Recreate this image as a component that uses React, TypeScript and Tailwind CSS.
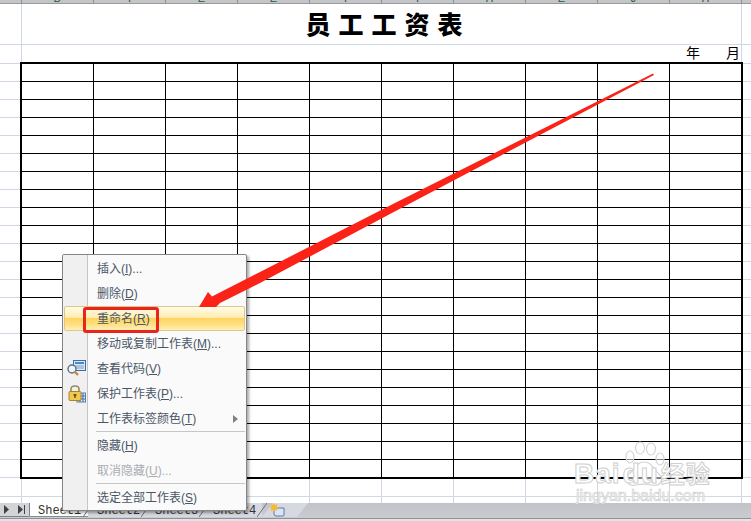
import React from "react";

const COLS = ["D", "I", "E", "E", "I", "I", "H", "E", "J", "H"];

function Gutter({ className }: { className: string }) {
  return (
    <div className={className}>
      <div className="h-[2px] border-b border-[#d0d7e5]" />
      {Array.from({ length: 23 }).map((_, i) => (
        <div key={i} className="h-[18px] border-b border-[#d0d7e5]" />
      ))}
    </div>
  );
}

function Item({ label, key2, tail, disabled, active, arrow }: { label: string; key2: string; tail?: string; disabled?: boolean; active?: boolean; arrow?: boolean }) {
  return (
    <div
      className={
        "relative mx-px flex h-[25px] items-center rounded-[2px] pl-[33px] text-[12px] " +
        (disabled ? "text-[#a9adb3] " : "text-[#4a5666] ") +
        (active
          ? "border border-[#dcc98a] bg-[linear-gradient(to_bottom,#fffbe6_0%,#ffedb4_45%,#ffd35e_50%,#ffe28a_80%,#fff0b8_100%)]"
          : "")
      }
    >
      <span className={active ? "-ml-px" : ""}>
        {label}(<span className="underline">{key2}</span>){tail}
      </span>
      {arrow && (
        <svg className="absolute left-[169px] top-[9px]" width="6" height="8" viewBox="0 0 6 8">
          <path d="M0 0 L5 4 L0 8 Z" fill="#808080" />
        </svg>
      )}
    </div>
  );
}

function Sep() {
  return (
    <div className="h-[2px] pl-[33px] pr-px">
      <div className="h-px bg-[#c6c6c6]" />
    </div>
  );
}

function Tab({ name }: { name: string }) {
  return (
    <div className="relative flex h-[14px] w-[58px] items-start bg-[#d6d9df] pl-[9px] pt-[1px] text-[12px] leading-[14px] text-[#333]">
      {name}
      <svg className="absolute -right-[5px] top-0" width="10" height="15" viewBox="0 0 10 15">
        <path d="M0 14 L10 0" stroke="#6f7278" strokeWidth="1" fill="none" />
      </svg>
    </div>
  );
}

export default function App() {
  return (
    <div className="relative h-[521px] w-[751px] overflow-hidden bg-white font-['Liberation_Sans','Noto_Sans_CJK_SC',sans-serif]">
      {/* column header strip */}
      <div className="flex h-[4px] overflow-hidden border-b border-[#9a9a9a] bg-[#c4c5c8]">
        <div className="h-full w-[22px] border-r border-[#8f8f8f]" />
        {COLS.map((c, i) => (
          <div key={i} className="relative h-full w-[72px] border-r border-[#8f8f8f]">
            <span className="absolute bottom-[-1px] left-0 right-0 text-center text-[11px] leading-[11px] text-[#27584a]">{c}</span>
          </div>
        ))}
      </div>

      {/* title row */}
      <div className="flex h-[41px] border-b border-[#d0d7e5]">
        <div className="w-[22px] border-r border-[#d0d7e5]" />
        <div className="flex w-[720px] items-center justify-center border-r border-[#d0d7e5] pl-[13px] pt-[3px] text-[25px] font-black tracking-[8px] text-black">
          员工工资表
        </div>
      </div>

      {/* year / month row */}
      <div className="flex h-[17px]">
        <div className="w-[22px] border-r border-[#d0d7e5]" />
        <div className="flex w-[720px] items-end justify-end gap-[26px] border-r border-[#d0d7e5] pr-px text-[14px] leading-[17px] text-black">
          <span>年</span>
          <span>月</span>
        </div>
      </div>

      {/* table row */}
      <div className="flex h-[417px]">
        <Gutter className="w-[20px]" />
        <div className="grid w-[723px] grid-cols-[repeat(9,72px)_71px] grid-rows-[repeat(22,18px)_17px] border-2 border-black">
          {Array.from({ length: 230 }).map((_, i) => (
            <div key={i} className={(i % 10 !== 9 ? "border-r " : "") + (i < 220 ? "border-b " : "") + "border-black"} />
          ))}
        </div>
        <Gutter className="flex-1" />
      </div>

      {/* rows beneath the table */}
      {[18, 6].map((h, r) => (
        <div key={r} className={r === 0 ? "flex h-[18px] border-b border-[#d0d7e5]" : "flex h-[6px]"}>
          <div className="w-[22px] border-r border-[#d0d7e5]" />
          {COLS.map((_, i) => (
            <div key={i} className="w-[72px] border-r border-[#d0d7e5]" />
          ))}
        </div>
      ))}

      {/* sheet tab bar */}
      <div className="flex h-[15px] bg-[linear-gradient(to_bottom,#c2c3c8,#cbccd1)] font-['Liberation_Mono','Noto_Sans_CJK_SC',monospace]">
        <div className="flex h-[14px] w-[30px] items-center gap-[6px] rounded-br-[2px] border-r border-b border-[#7e8084] bg-[#d3d4d6] pl-[3px]">
          <svg width="8" height="9" viewBox="0 0 8 9"><path d="M1 0 L6 4.5 L1 9 Z" fill="#3f4347" /></svg>
          <svg width="9" height="9" viewBox="0 0 9 9"><path d="M1 0 L6 4.5 L1 9 Z M7 0 H8 V9 H7 Z" fill="#3f4347" /></svg>
        </div>
        <div className="relative flex h-[14px] w-[58px] items-start border-b border-[#8a8c90] bg-white pl-[8px] pt-[1px] text-[12px] leading-[14px] text-[#333]">
          Sheet1
          <svg className="absolute -right-[5px] top-0" width="10" height="15" viewBox="0 0 10 15">
            <path d="M0 14 L10 0" stroke="#6f7278" strokeWidth="1" fill="none" />
          </svg>
        </div>
        <Tab name="Sheet2" />
        <Tab name="Sheet3" />
        <Tab name="Sheet4" />
        <div className="relative h-[14px] w-[46px] bg-[#d6d9df] [clip-path:polygon(0_100%,11px_0,100%_0,calc(100%-11px)_100%)]">
          <svg className="absolute left-[8px] top-0" width="16" height="14" viewBox="0 0 16 14">
            <path d="M4 5 H14 V12 Q14 13 13 13 H6 Q4 13 4 11 Z" fill="#dbe6f4" stroke="#5d7a9e" strokeWidth="1" />
            <path d="M4 0 L5 2 L7.5 1 L6.5 3.5 L9 4.5 L6.5 5.5 L7.5 8 L5 7 L4 9 L3 7 L0.5 8 L1.5 5.5 L-1 4.5 L1.5 3.5 L0.5 1 L3 2 Z" fill="#f4b83a" />
          </svg>
        </div>
      </div>
      <div className="h-[3px] border-t border-[#8f9196] bg-[#e3e4e7]" />

      {/* watermark */}
      <div className="pointer-events-none absolute left-[574px] top-[440px] h-[64px] w-[140px] text-white">
        <svg className="absolute left-[44px] top-0" width="50" height="48" viewBox="0 0 50 48" fill="#ffffff" fillOpacity="0.5" stroke="#d4d4d4" strokeWidth="1.2">
          <ellipse cx="12" cy="17" rx="4" ry="6" />
          <ellipse cx="22" cy="8" rx="4.5" ry="6" />
          <ellipse cx="33" cy="9" rx="4.5" ry="6" />
          <ellipse cx="42" cy="19" rx="4" ry="6" />
          <path d="M26 22 C18 22 17 30 11 34 C5 39 10 47 18 45 C23 44 29 44 34 45 C42 47 47 39 41 34 C35 29 34 22 26 22 Z" />
        </svg>
        <div className="absolute left-0 top-[19px] whitespace-nowrap text-[28px] font-bold leading-[30px] tracking-[1px] [-webkit-text-stroke:1px_#cfcfcf]">
          Bai<span className="ml-[2px]">du</span>
          <span className="ml-[2px] text-[24px]">经验</span>
        </div>
        <div className="absolute left-[2px] top-[48px] whitespace-nowrap text-[16px] leading-[16px] [-webkit-text-stroke:0.7px_#cfcfcf]">jingyan.baidu.com</div>
      </div>

      {/* context menu */}
      <div className="absolute left-[62px] top-[254px] h-[257px] w-[185px] rounded-[2px] border border-[#868686] bg-[#fafafa] pt-px shadow-[2px_2px_3px_rgba(0,0,0,0.35)]">
        <div className="absolute bottom-0 left-0 top-0 w-[25px] rounded-l-[2px] border-r border-[#c5c5c5] bg-[#f0f0f0]" />
        <Item label="插入" key2="I" tail="..." />
        <Item label="删除" key2="D" />
        <Item label="重命名" key2="R" active />
        <Item label="移动或复制工作表" key2="M" tail="..." />
        <Item label="查看代码" key2="V" />
        <Item label="保护工作表" key2="P" tail="..." />
        <Item label="工作表标签颜色" key2="T" arrow />
        <Sep />
        <Item label="隐藏" key2="H" />
        <Item label="取消隐藏" key2="U" tail="..." disabled />
        <Sep />
        <Item label="选定全部工作表" key2="S" />

        {/* 查看代码 icon */}
        <svg className="absolute left-[4px] top-[105px]" width="19" height="17" viewBox="0 0 19 17">
          <rect x="6.5" y="0.5" width="12" height="10" fill="#dbe8f7" stroke="#3f6ea6" />
          <rect x="8" y="2" width="9" height="2" fill="#4f86c6" />
          <rect x="8" y="5.5" width="9" height="1" fill="#7f9fc6" />
          <rect x="8" y="7.5" width="9" height="1" fill="#7f9fc6" />
          <circle cx="5" cy="9" r="4" fill="#eef4fb" stroke="#5d7080" strokeWidth="1.4" />
          <path d="M8 12 L11 15" stroke="#c98a2a" strokeWidth="2.4" />
        </svg>
        {/* 保护工作表 icon */}
        <svg className="absolute left-[5px] top-[130px]" width="18" height="18" viewBox="0 0 18 18">
          <rect x="9" y="8" width="8.5" height="9" fill="#dfe9f7" stroke="#5a7fb0" />
          <path d="M9 11 H17 M9 14 H17 M12 8 V17 M15 8 V17" stroke="#3f6ea6" />
          <path d="M3 7 V4 Q3 1 7 1 Q11 1 11 4 V7" fill="none" stroke="#9a8a60" strokeWidth="1.6" />
          <rect x="1" y="6.5" width="12" height="9" rx="1" fill="#f2c94f" stroke="#a5852d" />
          <path d="M7 9 V13 M5.5 10 H8.5" stroke="#5e4a14" strokeWidth="1.4" />
        </svg>
        {/* red highlight round 重命名 */}
        <div className="absolute left-[20px] top-[52px] h-[26px] w-[76px] rounded-[3px] border-[3px] border-[#e8241c]" />
      </div>

      {/* annotation arrow */}
      <svg className="pointer-events-none absolute left-0 top-0" width="751" height="521" viewBox="0 0 751 521">
        <path d="M653 73.5 L654 75 L390 214 L260 283 L220 303 L216 307 L199 307 L208 292 L212 296.5 L260 272 L390 205.5 Z" fill="#fb2218" />
      </svg>
    </div>
  );
}
